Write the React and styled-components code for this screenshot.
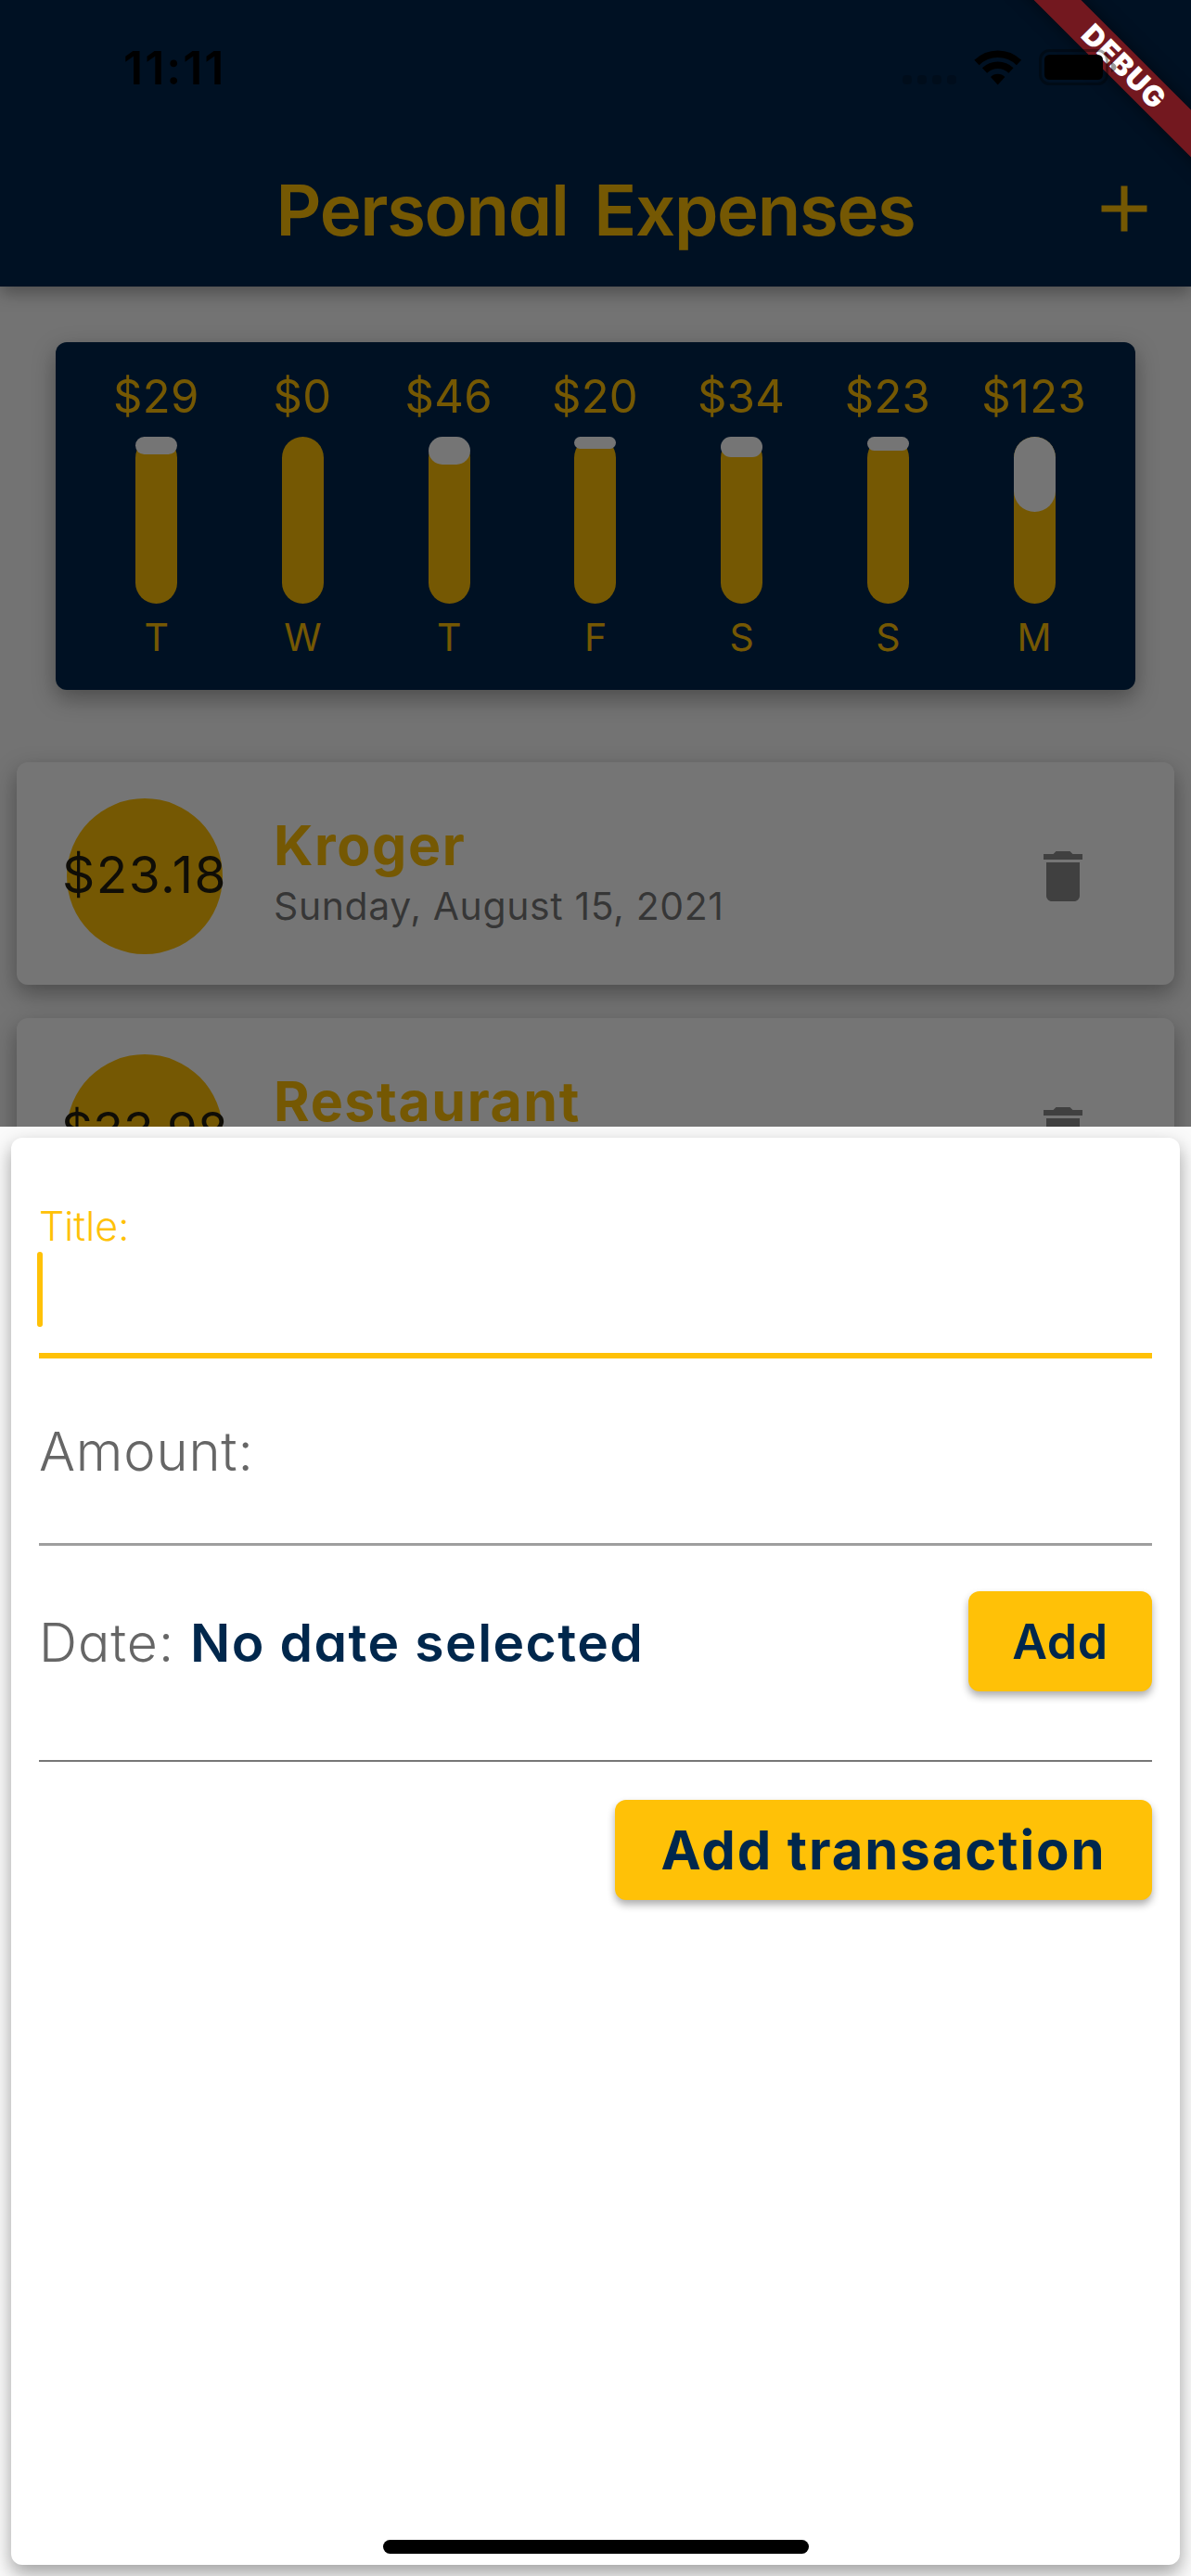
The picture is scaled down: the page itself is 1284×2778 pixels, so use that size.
import React from "react";
import styled, { createGlobalStyle, css } from "styled-components";

const navy = "#00274c";
const gold = "#ffc107";

const GlobalStyle = createGlobalStyle`
  html, body { margin: 0; padding: 0; }
  * { box-sizing: border-box; }
  body { width: 1284px; height: 2778px; overflow: hidden; }
`;

const rounded = css`
  font-family: Inter, "Noto Sans", sans-serif;
  font-feature-settings: "cv11";
`;

const Screen = styled.div`
  position: relative;
  width: 1284px;
  height: 2778px;
  overflow: hidden;
  background: #fafafa;
  font-family: Inter, Roboto, "Liberation Sans", sans-serif;
`;

const Header = styled.header`
  position: relative;
  display: grid;
  grid-template-columns: 144px 1fr 144px;
  align-items: center;
  height: 309px;
  padding-top: 141px;
  background: ${navy};
  color: ${gold};
  box-shadow: 0 6px 18px rgba(0, 0, 0, 0.35);
`;

const AppTitle = styled.h1`
  ${rounded}
  grid-column: 2;
  margin: 1px 0 0;
  font-size: 76px;
  font-weight: 600;
  line-height: 90px;
  letter-spacing: -1.3px;
  word-spacing: 10px;
  text-align: center;
  white-space: nowrap;
`;

const AddIcon = styled.svg`
  width: 84px;
  height: 84px;
  justify-self: center;
  fill: ${gold};
`;

const shadow = css`
  box-shadow: 0 9px 24px rgba(0, 0, 0, 0.34);
`;

const ChartCard = styled.section`
  ${shadow}
  display: grid;
  grid-template-columns: repeat(7, 1fr);
  height: 375px;
  margin: 60px 60px 78px;
  padding: 29px 30px 0;
  border-radius: 12px;
  background: ${navy};
  color: ${gold};
`;

const Day = styled.div`
  display: flex;
  flex-direction: column;
  align-items: center;
`;

const DayAmount = styled.span`
  margin-left: -1px;
  font-size: 49px;
  line-height: 60px;
  letter-spacing: 0.3px;
  white-space: nowrap;
`;

const Bar = styled.div`
  width: 45px;
  height: 180px;
  margin: 13px 0 12px;
  border-radius: 30px;
  background: ${gold};
`;

const BarFill = styled.div`
  height: ${(p) => p.$height}px;
  border-radius: 30px;
  background: #fff;
`;

const DayName = styled.span`
  font-size: 41px;
  line-height: 48px;
`;

const List = styled.ul`
  display: flex;
  flex-direction: column;
  gap: 36px;
  margin: 0;
  padding: 0 18px;
  list-style: none;
`;

const Expense = styled.li`
  ${shadow}
  display: flex;
  align-items: center;
  height: 240px;
  padding: 6px 84px 0 54px;
  border-radius: 12px;
  background: #fff;
`;

const Circle = styled.div`
  display: flex;
  align-items: center;
  justify-content: center;
  flex: none;
  width: 168px;
  height: 168px;
  padding-bottom: 4px;
  border-radius: 50%;
  background: ${gold};
  color: #211d10;
  font-size: ${(p) => p.$size}px;
  letter-spacing: ${(p) => p.$spacing}px;
  white-space: nowrap;
`;

const ExpenseText = styled.div`
  flex: 1;
  margin: 0 0 7px 55px;
`;

const ExpenseTitle = styled.div`
  color: ${gold};
  font-size: 59px;
  font-weight: 700;
  line-height: 70px;
  letter-spacing: 1.6px;
`;

const ExpenseDate = styled.div`
  color: rgba(0, 0, 0, 0.54);
  font-size: 41px;
  line-height: 60px;
  letter-spacing: 0.6px;
`;

const TrashIcon = styled.svg`
  flex: none;
  width: 72px;
  height: 72px;
  fill: rgba(0, 0, 0, 0.45);
`;

const Scrim = styled.div`
  position: absolute;
  inset: 0;
  background: rgba(0, 0, 0, 0.54);
`;

const Sheet = styled.div`
  position: absolute;
  inset: 1215px 0 0;
  padding: 12px;
  background: #fafafa;
`;

const SheetCard = styled.form`
  height: 1539px;
  padding: 68px 30px 0;
  border-radius: 12px;
  background: #fff;
  box-shadow: 0 9px 20px rgba(0, 0, 0, 0.36);
`;

const FocusedField = styled.div`
  height: 170px;
  border-bottom: 6px solid ${gold};
`;

const FloatingLabel = styled.div`
  ${rounded}
  color: ${gold};
  font-size: 43px;
  font-weight: 300;
  line-height: 54px;
`;

const Caret = styled.div`
  width: 6px;
  height: 81px;
  margin: 1px 0 0 -2px;
  border-radius: 3px;
  background: ${gold};
`;

const Field = styled.div`
  ${rounded}
  height: 202px;
  padding-top: 64px;
  border-bottom: 3px solid #9e9e9e;
  color: #666;
  font-size: 58px;
  font-weight: 300;
  line-height: 72px;
  letter-spacing: 0.8px;
`;

const DateRow = styled.div`
  display: flex;
  justify-content: space-between;
  height: 233px;
  padding-top: 49px;
  margin-bottom: 41px;
  border-bottom: 2px solid #777;
`;

const DateText = styled.div`
  ${rounded}
  color: #666;
  font-size: 57px;
  font-weight: 300;
  line-height: 112px;
  letter-spacing: 1px;
  white-space: nowrap;
`;

const DateValue = styled.strong`
  color: ${navy};
  font-weight: 600;
  letter-spacing: 1.4px;
`;

const Button = styled.button`
  ${(p) => p.$rounded && rounded}
  ${(p) => !p.$rounded && "font-family: Inter, Roboto, sans-serif;"}
  width: ${(p) => p.$width}px;
  height: 108px;
  padding: 0;
  border: 0;
  border-radius: 12px;
  background: ${gold};
  color: ${navy};
  font-size: ${(p) => p.$size}px;
  font-weight: ${(p) => (p.$rounded ? 600 : 700)};
  letter-spacing: ${(p) => p.$spacing}px;
  white-space: nowrap;
  box-shadow: 0 5px 8px rgba(0, 0, 0, 0.32);
`;

const Actions = styled.div`
  display: flex;
  justify-content: flex-end;
`;

const DebugBanner = styled.div`
  position: absolute;
  top: 54px;
  left: 1062px;
  width: 300px;
  height: 36px;
  transform: rotate(45deg);
  background: rgba(183, 28, 28, 0.627);
  box-shadow: 0 0 18px rgba(0, 0, 0, 0.5);
  color: #fff;
  font-size: 31px;
  font-weight: 900;
  line-height: 35px;
  letter-spacing: 1.2px;
  text-align: center;
`;

const StatusBar = styled.div`
  position: absolute;
  inset: 0 0 auto;
  display: flex;
  justify-content: space-between;
  align-items: center;
  height: 146px;
  padding: 0 80px 0 133px;
  color: #000;
`;

const Clock = styled.time`
  font-size: 50px;
  font-weight: 600;
  letter-spacing: 2px;
`;

const StatusIcons = styled.svg`
  width: 234px;
  height: 40px;
`;

const HomeIndicator = styled.div`
  position: absolute;
  left: 413px;
  bottom: 24px;
  width: 459px;
  height: 15px;
  border-radius: 8px;
  background: #000;
`;

const days = [
  { amount: "$29", name: "T", fill: 19 },
  { amount: "$0", name: "W", fill: 0 },
  { amount: "$46", name: "T", fill: 30 },
  { amount: "$20", name: "F", fill: 13 },
  { amount: "$34", name: "S", fill: 22 },
  { amount: "$23", name: "S", fill: 15 },
  { amount: "$123", name: "M", fill: 81 },
];

const expenses = [
  { amount: "$23.18", size: 55, spacing: 1.5, title: "Kroger", date: "Sunday, August 15, 2021" },
  { amount: "$33.98", size: 53, spacing: 0.2, title: "Restaurant", date: "Saturday, August 14, 2021" },
];

export default function App() {
  return (
    <Screen>
      <GlobalStyle />
      <Header>
        <AppTitle>Personal Expenses</AppTitle>
        <AddIcon viewBox="0 0 24 24">
          <path d="M19 13h-6v6h-2v-6H5v-2h6V5h2v6h6v2z" />
        </AddIcon>
      </Header>
      <ChartCard>
        {days.map((d, i) => (
          <Day key={i}>
            <DayAmount>{d.amount}</DayAmount>
            <Bar>
              <BarFill $height={d.fill} />
            </Bar>
            <DayName>{d.name}</DayName>
          </Day>
        ))}
      </ChartCard>
      <List>
        {expenses.map((e) => (
          <Expense key={e.title}>
            <Circle $size={e.size} $spacing={e.spacing}>{e.amount}</Circle>
            <ExpenseText>
              <ExpenseTitle>{e.title}</ExpenseTitle>
              <ExpenseDate>{e.date}</ExpenseDate>
            </ExpenseText>
            <TrashIcon viewBox="0 0 24 24">
              <path d="M6 19c0 1.1.9 2 2 2h8c1.1 0 2-.9 2-2V7H6v12zM19 4h-3.5l-1-1h-5l-1 1H5v2h14V4z" />
            </TrashIcon>
          </Expense>
        ))}
      </List>
      <Scrim />
      <Sheet>
        <SheetCard>
          <FocusedField>
            <FloatingLabel>Title:</FloatingLabel>
            <Caret />
          </FocusedField>
          <Field>Amount:</Field>
          <DateRow>
            <DateText>
              Date: <DateValue>No date selected</DateValue>
            </DateText>
            <Button type="button" $rounded $width={198} $size={52} $spacing={0.5}>
              Add
            </Button>
          </DateRow>
          <Actions>
            <Button type="button" $width={579} $size={58} $spacing={1.9}>
              Add transaction
            </Button>
          </Actions>
        </SheetCard>
      </Sheet>
      <DebugBanner>DEBUG</DebugBanner>
      <StatusBar>
        <Clock>11:11</Clock>
        <StatusIcons viewBox="970 53 234 40">
          <g opacity="0.2">
            <rect x="973" y="81" width="10" height="10" rx="4" />
            <rect x="989" y="81" width="10" height="10" rx="4" />
            <rect x="1005" y="81" width="10" height="10" rx="4" />
            <rect x="1021" y="81" width="10" height="10" rx="4" />
          </g>
          <g fill="none" stroke="#000" strokeWidth="7.5">
            <path d="M1053 67.5a32.500 32.500 0 0 1 45.500 0" />
            <path d="M1061.500 76a20.500 20.500 0 0 1 28.500 0" />
          </g>
          <path d="M1075.700 91.500l-7.700-8.500a11 11 0 0 1 15.400 0z" />
          <rect x="1121.500" y="54.500" width="72" height="36" rx="10" fill="none" stroke="#000" strokeWidth="3" opacity="0.35" />
          <rect x="1126" y="59" width="63" height="27" rx="5.500" />
          <path d="M1198 67c3.500 1 5.500 3 5.500 5.500s-2 4.500-5.500 5.500z" opacity="0.4" />
        </StatusIcons>
      </StatusBar>
      <HomeIndicator />
    </Screen>
  );
}
